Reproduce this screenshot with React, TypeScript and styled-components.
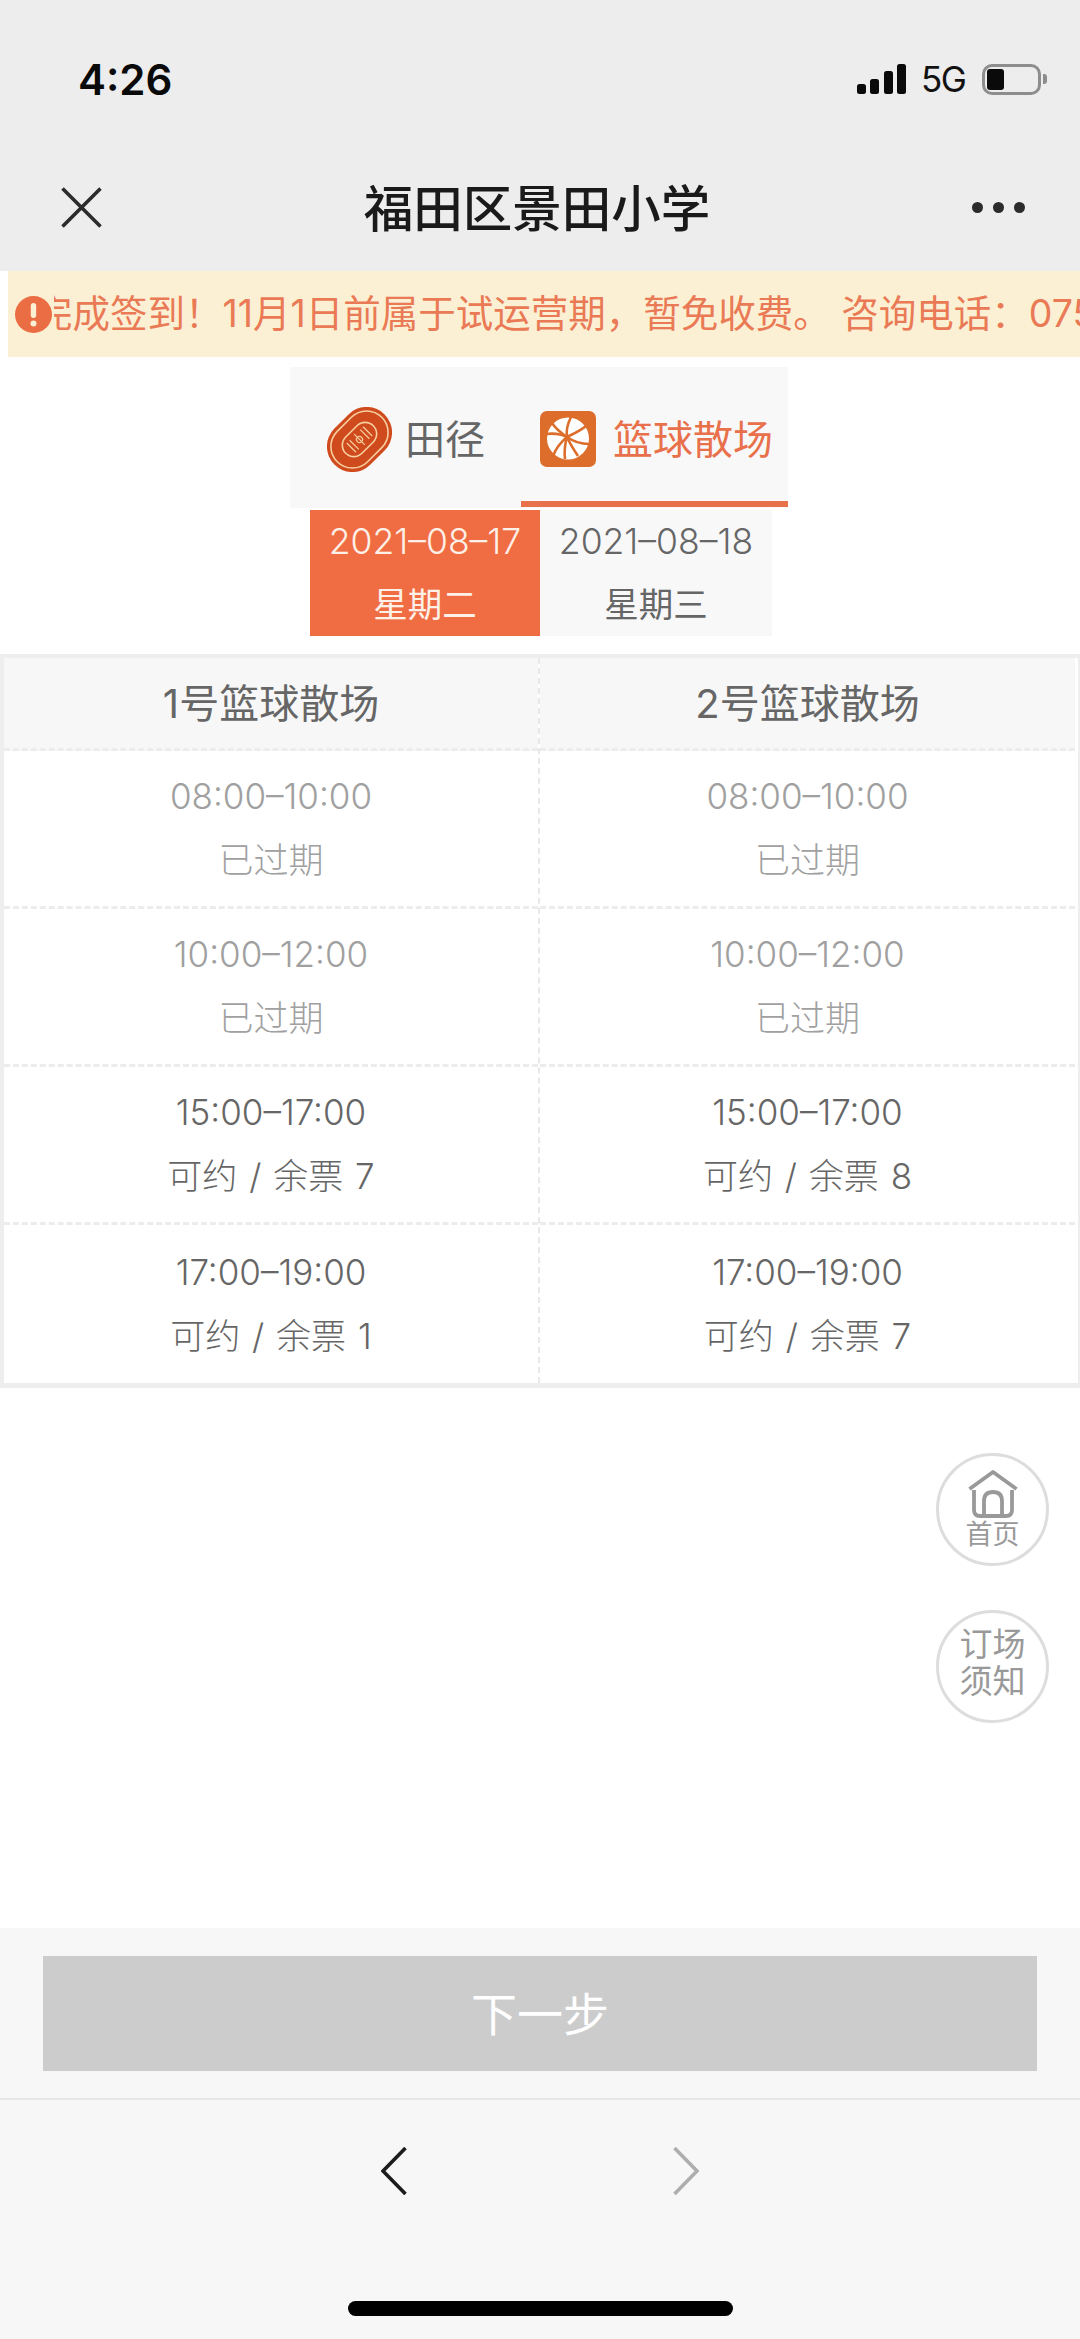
import styled, { createGlobalStyle } from 'styled-components';

const GlobalStyle = createGlobalStyle`
    html,
    body {
        margin: 0;
        padding: 0;
        background: #fff;
    }
    * {
        box-sizing: border-box;
    }
`;

type Slot = { time: string; status: string; expired?: boolean };

const courts: { name: string; slots: Slot[] }[] = [
    {
        name: '1号篮球散场',
        slots: [
            { time: '08:00–10:00', status: '已过期', expired: true },
            { time: '10:00–12:00', status: '已过期', expired: true },
            { time: '15:00–17:00', status: '可约 / 余票 7' },
            { time: '17:00–19:00', status: '可约 / 余票 1' },
        ],
    },
    {
        name: '2号篮球散场',
        slots: [
            { time: '08:00–10:00', status: '已过期', expired: true },
            { time: '10:00–12:00', status: '已过期', expired: true },
            { time: '15:00–17:00', status: '可约 / 余票 8' },
            { time: '17:00–19:00', status: '可约 / 余票 7' },
        ],
    },
];

const TrackIcon = () => (
    <svg width="65" height="65" viewBox="0 0 65 65">
        <g transform="rotate(-45 32.5 32.5)">
            <rect x="-3" y="7" width="71" height="51" rx="25.5" fill="#cf4a1c" />
            <rect x="1" y="11" width="63" height="43" rx="21.5" fill="none" stroke="#f8cf9f" strokeWidth="1.6" />
            <rect x="13" y="21" width="39" height="23" rx="11.5" fill="none" stroke="#f8cf9f" strokeWidth="1.6" />
            <path d="M21 26v13M25 26v13M40 26v13M44 26v13M32.5 25v15" stroke="#f8cf9f" strokeWidth="1.2" />
            <circle cx="32.5" cy="32.5" r="3" fill="none" stroke="#f8cf9f" strokeWidth="1.2" />
        </g>
    </svg>
);

const BallIcon = () => (
    <svg width="56" height="56" viewBox="0 0 56 56">
        <rect width="56" height="56" rx="7" fill="#dd6d2b" />
        <circle cx="28" cy="27.5" r="21" fill="#fff" />
        <g fill="none" stroke="#dd6d2b" strokeWidth="2.6">
            <path d="M31 6c-4 8-5 14-4 20" />
            <path d="M12 12c4 6 9 10 15 14" />
            <path d="M6 23c8-1 15 0 21 3" />
            <path d="M27 26c7 5 14 7 22 7" />
            <path d="M27 26c6-3 13-6 19-11" />
            <path d="M27 26c-6 5-11 11-14 19" />
            <path d="M27 26c-2 7-3 14-2 22" />
            <path d="M27 26c3 7 7 13 11 19" />
        </g>
    </svg>
);

const Close = () => (
    <svg width="41" height="41" viewBox="0 0 41 41">
        <path d="M1.5 1.5 39.5 39.5M39.5 1.5 1.5 39.5" stroke="#2b2b2b" strokeWidth="3.6" />
    </svg>
);

const Alert = () => (
    <svg width="37" height="37" viewBox="0 0 37 37">
        <circle cx="18.5" cy="18.5" r="18.5" fill="#ea6d44" />
        <rect x="15.8" y="7" width="5.4" height="15" rx="2.7" fill="#fbf0d4" />
        <circle cx="18.5" cy="27.5" r="3" fill="#fbf0d4" />
    </svg>
);

const HomeGlyph = () => (
    <svg width="50" height="48" viewBox="0 0 50 48">
        <g fill="none" stroke="#999" strokeWidth="3.8" strokeLinejoin="round">
            <path d="M1.5 19 25 2 48.5 19" />
            <path d="M6 20v20q0 6 6 6h26q6 0 6-6V20" />
            <path d="M16 46V31q0-9 9-9t9 9v15" />
        </g>
    </svg>
);

const Chevron = ({ back, color }: { back?: boolean; color: string }) => (
    <svg width="26" height="48" viewBox="0 0 26 48">
        <path
            d={back ? 'M24.5 1 2 24 24.5 47' : 'M1.5 1 24 24 1.5 47'}
            fill="none"
            stroke={color}
            strokeWidth="3.6"
        />
    </svg>
);

export default function App() {
    return (
        <Page>
            <GlobalStyle />
            <TopBar>
                <StatusBar>
                    <Clock>4:26</Clock>
                    <StatusRight>
                        <SignalBars>
                            {[10, 15, 23, 30].map(h => (
                                <Bar key={h} $height={h} />
                            ))}
                        </SignalBars>
                        <Network>5G</Network>
                        <Battery>
                            <BatteryLevel />
                        </Battery>
                        <BatteryNub />
                    </StatusRight>
                </StatusBar>
                <NavBar>
                    <Close />
                    <Title>福田区景田小学</Title>
                    <MoreDots>
                        <Dot />
                        <Dot />
                        <Dot />
                    </MoreDots>
                </NavBar>
            </TopBar>

            <Notice>
                <Alert />
                <NoticeWindow>
                    <NoticeText>完成签到！11月1日前属于试运营期，暂免收费。 咨询电话：075</NoticeText>
                </NoticeWindow>
            </Notice>

            <Tabs>
                <Tab $width={231} $gap={13} $left={37}>
                    <TrackIcon />
                    <TabLabel>田径</TabLabel>
                </Tab>
                <Tab $width={267} $gap={17} $left={19} $active>
                    <BallIcon />
                    <TabLabel $active>篮球散场</TabLabel>
                </Tab>
            </Tabs>

            <Dates>
                <DateCell $active $width={230}>
                    <DateLine>2021–08–17</DateLine>
                    <span>星期二</span>
                </DateCell>
                <DateCell $width={232}>
                    <DateLine>2021–08–18</DateLine>
                    <span>星期三</span>
                </DateCell>
            </Dates>

            <Table>
                {courts.map((court, c) => (
                    <Column key={court.name} $last={c === courts.length - 1}>
                        <CourtHead>{court.name}</CourtHead>
                        {court.slots.map((slot, i) => (
                            <SlotCell key={slot.time} $expired={slot.expired} $last={i === court.slots.length - 1}>
                                <TimeLine>{slot.time}</TimeLine>
                                <StatusLine>{slot.status}</StatusLine>
                            </SlotCell>
                        ))}
                    </Column>
                ))}
            </Table>

            <FloatStack>
                <FloatButton>
                    <HomeGlyph />
                    <HomeText>首页</HomeText>
                </FloatButton>
                <FloatButton>
                    <NoticeLink>
                        订场
                        <br />
                        须知
                    </NoticeLink>
                </FloatButton>
            </FloatStack>

            <Footer>
                <NextBar>
                    <NextButton>下一步</NextButton>
                </NextBar>
                <Toolbar>
                    <Arrows>
                        <Chevron back color="#1c1c1c" />
                        <Chevron color="#aeaeae" />
                    </Arrows>
                    <HomeIndicator />
                </Toolbar>
            </Footer>
        </Page>
    );
}

const Page = styled.div`
    position: relative;
    width: 1080px;
    height: 2339px;
    display: flex;
    flex-direction: column;
    overflow: hidden;
    background: #fff;
    font-family: Inter, 'Noto Sans CJK SC', sans-serif;
    color: #666;
`;

const TopBar = styled.header`
    height: 271px;
    background: #ededed;
`;

const StatusBar = styled.div`
    height: 158px;
    display: flex;
    align-items: center;
    justify-content: space-between;
    padding: 0 33px 0 78px;
`;

const Clock = styled.div`
    font-size: 42px;
    font-weight: 600;
    color: #0a0a0a;
`;

const StatusRight = styled.div`
    display: flex;
    align-items: center;
`;

const SignalBars = styled.div`
    display: flex;
    align-items: flex-end;
    gap: 4.5px;
    height: 30px;
`;

const Bar = styled.div<{ $height: number }>`
    width: 9px;
    height: ${props => props.$height}px;
    border-radius: 2.5px;
    background: #0a0a0a;
`;

const Network = styled.div`
    width: 46px;
    margin-left: 15px;
    font-size: 35px;
    letter-spacing: -1.5px;
    color: #111;
`;

const Battery = styled.div`
    width: 59px;
    height: 31px;
    margin-left: 15px;
    padding: 2px;
    border: 3px solid #8d8d8d;
    border-radius: 10px;
`;

const BatteryLevel = styled.div`
    width: 17px;
    height: 100%;
    border-radius: 3px;
    background: #0a0a0a;
`;

const BatteryNub = styled.div`
    width: 4px;
    height: 10px;
    margin-left: 2px;
    border-radius: 0 3px 3px 0;
    background: #8d8d8d;
`;

const NavBar = styled.div`
    height: 98px;
    display: flex;
    align-items: center;
    justify-content: space-between;
    padding: 0 55px 0 61px;
`;

const Title = styled.h1`
    margin: -4px 0 0 0;
    font-size: 49.5px;
    font-weight: 500;
    color: #1a1a1a;
`;

const MoreDots = styled.div`
    display: flex;
    gap: 10px;
`;

const Dot = styled.div`
    width: 11px;
    height: 11px;
    border-radius: 50%;
    background: #2b2b2b;
`;

const Notice = styled.div`
    height: 86px;
    margin-left: 8px;
    padding-left: 7px;
    display: flex;
    align-items: center;
    background: #fbf0d4;
`;

const NoticeWindow = styled.div`
    flex: 1;
    min-width: 0;
    margin-left: 2px;
    overflow: hidden;
`;

const NoticeText = styled.div`
    margin: -7px 0 0 -19px;
    white-space: pre;
    font-size: 37.5px;
    color: #ea7a55;
`;

const Tabs = styled.div`
    display: flex;
    width: 498px;
    height: 141px;
    margin: 10px 0 0 290px;
    background: #f8f8f9;
`;

const Tab = styled.div<{ $width: number; $gap: number; $left: number; $active?: boolean }>`
    width: ${props => props.$width}px;
    height: 140px;
    padding: 10px 0 0 ${props => props.$left}px;
    display: flex;
    align-items: center;
    gap: ${props => props.$gap}px;
    border-bottom: 6px solid ${props => (props.$active ? '#e8704a' : 'transparent')};
`;

const TabLabel = styled.span<{ $active?: boolean }>`
    margin-top: -5px;
    font-size: 40px;
    color: ${props => (props.$active ? '#e8704a' : '#666')};
`;

const Dates = styled.div`
    display: flex;
    margin: 2px 0 0 310px;
`;

const DateCell = styled.div<{ $active?: boolean; $width: number }>`
    width: ${props => props.$width}px;
    height: 126px;
    padding-bottom: 1px;
    display: flex;
    flex-direction: column;
    align-items: center;
    justify-content: center;
    font-size: 34.5px;
    line-height: 63px;
    background: ${props => (props.$active ? '#f06d43' : '#f8f8f9')};
    color: ${props => (props.$active ? '#fdf0e8' : '#666')};
`;

const DateLine = styled.span`
    font-size: 35.5px;
    font-weight: 300;
`;

const Table = styled.div`
    display: grid;
    grid-template-columns: 536px 1fr;
    height: 734px;
    margin-top: 18px;
    border: 4px solid #eee;
    border-right-width: 2px;
    border-bottom-width: 5px;
`;

const Column = styled.div<{ $last?: boolean }>`
    display: flex;
    flex-direction: column;
    padding-right: ${props => (props.$last ? '3px' : '0')};
    border-right: ${props => (props.$last ? 'none' : '2px dashed #e8e8e8')};
`;

const CourtHead = styled.div`
    height: 93px;
    padding-bottom: 5px;
    display: flex;
    align-items: center;
    justify-content: center;
    font-size: 40px;
    color: #666;
    background: #f7f7f7;
    border-bottom: 3px dashed #ececec;
`;

const SlotCell = styled.div<{ $expired?: boolean; $last?: boolean }>`
    height: 158px;
    padding-bottom: 1px;
    display: flex;
    flex-direction: column;
    align-items: center;
    justify-content: center;
    font-size: 35px;
    line-height: 64px;
    color: ${props => (props.$expired ? '#a0a0a0' : '#666')};
    border-bottom: ${props => (props.$last ? 'none' : '3px dashed #ececec')};
`;

const TimeLine = styled.span`
    font-size: 35px;
    font-weight: 300;
`;

const StatusLine = styled.span`
    word-spacing: 2px;
    font-weight: 300;
`;

const FloatStack = styled.div`
    position: absolute;
    top: 1453px;
    right: 31px;
    display: flex;
    flex-direction: column;
    gap: 44px;
`;

const FloatButton = styled.div`
    width: 113px;
    height: 113px;
    display: flex;
    flex-direction: column;
    align-items: center;
    justify-content: center;
    border: 3px solid #ddd;
    border-radius: 50%;
    background: #fff;
`;

const HomeText = styled.span`
    margin-top: 2px;
    font-size: 27px;
    line-height: 30px;
    color: #999;
`;

const NoticeLink = styled.span`
    margin-top: -8px;
    font-size: 33px;
    line-height: 37px;
    text-align: center;
    color: #999;
`;

const Footer = styled.footer`
    margin-top: auto;
    background: #f7f7f7;
`;

const NextBar = styled.div`
    height: 172px;
    padding: 28px 43px;
    border-bottom: 2px solid #e6e6e6;
`;

const NextButton = styled.div`
    height: 115px;
    padding-bottom: 6px;
    display: flex;
    align-items: center;
    justify-content: center;
    font-size: 46px;
    color: #fff;
    background: #ccc;
`;

const Toolbar = styled.div`
    height: 239px;
    display: flex;
    flex-direction: column;
    align-items: center;
`;

const Arrows = styled.div`
    height: 142px;
    display: flex;
    align-items: center;
    gap: 266px;
`;

const HomeIndicator = styled.div`
    width: 385px;
    height: 15px;
    margin-top: 59px;
    border-radius: 8px;
    background: #000;
`;
